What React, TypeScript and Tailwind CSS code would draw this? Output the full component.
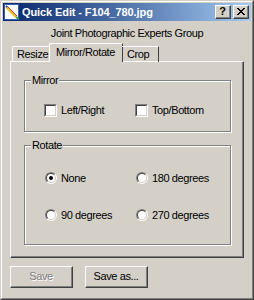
import React from "react";

const font = { fontFamily: '"Liberation Sans", Arial, sans-serif' };

const TitleIcon = () => (
  <svg width="16" height="16" viewBox="0 0 16 16" className="shrink-0">
    <rect x="0.5" y="0.5" width="14" height="15" fill="#ffffff" stroke="#3060c0" />
    <path d="M2 3 L12 13" stroke="#e8c030" strokeWidth="2.2" />
    <path d="M3 2 L13 12" stroke="#d03020" strokeWidth="1" />
    <path d="M12 13 L15 15" stroke="#30a040" strokeWidth="2" />
    <path d="M2 3 L3 2" stroke="#2050c0" strokeWidth="2" />
  </svg>
);

const CaptionButton = ({ children }: { children: React.ReactNode }) => (
  <div className="w-[16px] h-[14px] bg-[#d4d0c8] border-t border-l border-white border-r border-b border-r-[#404040] border-b-[#404040]">
    <div className="w-full h-full border-r border-b border-[#808080] flex items-center justify-center text-[11px] font-bold leading-none text-black">
      {children}
    </div>
  </div>
);

const Checkbox = ({ label }: { label: string }) => (
  <label className="flex items-center gap-[4px]">
    <span className="w-[13px] h-[13px] border border-t-[#808080] border-l-[#808080] border-r-white border-b-white">
      <span className="block w-full h-full bg-white border border-t-[#404040] border-l-[#404040] border-r-[#d4d0c8] border-b-[#d4d0c8]" />
    </span>
    <span>{label}</span>
  </label>
);

const Radio = ({ label, checked }: { label: string; checked?: boolean }) => (
  <label className="flex items-center gap-[4px]">
    <span className="w-[12px] h-[12px] rounded-full border border-t-[#808080] border-l-[#808080] border-r-white border-b-white">
      <span className="flex items-center justify-center w-full h-full rounded-full bg-white border border-t-[#404040] border-l-[#404040] border-r-[#d4d0c8] border-b-[#d4d0c8]">
        {checked && <span className="w-[4px] h-[4px] rounded-full bg-black" />}
      </span>
    </span>
    <span>{label}</span>
  </label>
);

const Button = ({ label, disabled }: { label: string; disabled?: boolean }) => (
  <div className="w-[63px] h-[22px] border border-t-white border-l-white border-r-[#404040] border-b-[#404040]">
    <div
      className={`w-full h-full border-r border-b border-[#808080] flex items-center justify-center ${
        disabled ? "text-[#808080] [text-shadow:1px_1px_0_#fff]" : "text-black"
      }`}
    >
      {label}
    </div>
  </div>
);

const GroupBox = ({ title, children, className }: { title: string; children: React.ReactNode; className: string }) => (
  <fieldset
    className={`border border-[#808080] shadow-[inset_1px_1px_0_#fff,1px_1px_0_#fff] ${className}`}
  >
    <legend className="ml-[6px] px-[1px] bg-[#d4d0c8] leading-[13px]">{title}</legend>
    {children}
  </fieldset>
);

export default function App() {
  return (
    <div
      className="w-[254px] h-[300px] bg-[#d4d0c8] text-[11px] tracking-[-0.4px] text-black border border-t-[#d4d0c8] border-l-[#d4d0c8] border-r-[#404040] border-b-[#404040]"
      style={font}
    >
      <div className="w-full h-full border border-t-white border-l-white border-r-[#808080] border-b-[#808080] p-[1px] flex flex-col">
        {/* title bar */}
        <div className="h-[18px] flex items-center pl-[1px] pr-[2px] bg-gradient-to-r from-[#0a246a] to-[#a6caf0]">
          <TitleIcon />
          <span className="ml-[2px] text-white font-bold text-[11px] tracking-[-0.1px] leading-none">Quick Edit - F104_780.jpg</span>
          <div className="ml-auto flex gap-[2px]">
            <CaptionButton>?</CaptionButton>
            <CaptionButton>
              <svg width="8" height="7" viewBox="0 0 8 7">
                <path d="M0 0 L7 7 M1 0 L8 7 M7 0 L0 7 M8 0 L1 7" stroke="#000" strokeWidth="1" />
              </svg>
            </CaptionButton>
          </div>
        </div>

        <div className="px-[7px] flex flex-col">
          <div className="text-center mt-[6px] leading-[13px]">Joint Photographic Experts Group</div>

          {/* tabs */}
          <div className="flex items-end pl-[2px] mt-[3px] h-[18px] relative z-10">
            <div className="h-[16px] w-[38px] border-t border-l border-white border-r border-r-[#404040] rounded-tl-[2px] flex items-center pl-[4px] -mb-[1px]">
              Resize
            </div>
            <div className="h-[19px] w-[74px] -mx-[1px] -mb-[1px] bg-[#d4d0c8] border-t border-l border-white border-r border-r-[#404040] rounded-tl-[2px] flex items-center pl-[6px] pb-[2px]">
              Mirror/Rotate
            </div>
            <div className="h-[16px] w-[37px] border-t border-white border-r border-r-[#404040] flex items-center pl-[5px] -mb-[1px]">
              Crop
            </div>
          </div>

          {/* tab panel */}
          <div className="h-[197px] border border-t-white border-l-white border-r-[#404040] border-b-[#404040]">
            <div className="w-full h-full border-r border-b border-[#808080] px-[13px] pt-[12px] flex flex-col">
              <GroupBox title="Mirror" className="h-[58px] w-[207px]">
                <div className="flex pl-[19px] pt-[15px]">
                  <div className="w-[91px]">
                    <Checkbox label="Left/Right" />
                  </div>
                  <Checkbox label="Top/Bottom" />
                </div>
              </GroupBox>
              <GroupBox title="Rotate" className="h-[106px] w-[207px] mt-[7px]">
                <div className="grid grid-cols-[91px_1fr] gap-y-[20px] pl-[20px] pt-[18px]">
                  <Radio label="None" checked />
                  <Radio label="180 degrees" />
                  <Radio label="90 degrees" />
                  <Radio label="270 degrees" />
                </div>
              </GroupBox>
            </div>
          </div>

          {/* buttons */}
          <div className="flex gap-[12px] mt-[8px]">
            <Button label="Save" disabled />
            <Button label="Save as..." />
          </div>
        </div>
      </div>
    </div>
  );
}
